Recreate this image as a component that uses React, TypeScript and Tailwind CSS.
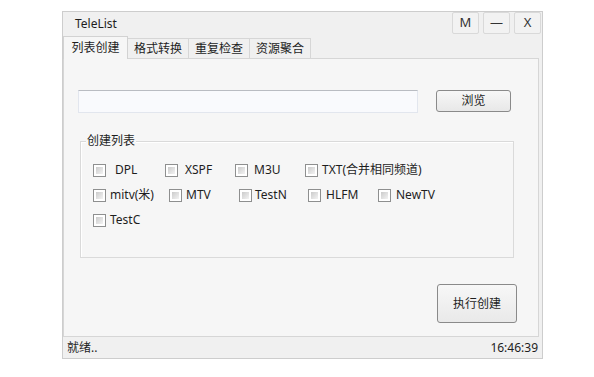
import React from 'react';

const font = { fontFamily: '"Noto Sans", "Noto Sans CJK SC", sans-serif' };

const rows = [
    [
        { label: 'DPL', w: 'w-[72px]', gap: 'ml-[9px]' },
        { label: 'XSPF', w: 'w-[70px]', gap: 'ml-[7px]' },
        { label: 'M3U', w: 'w-[70px]', gap: 'ml-[6px]' },
        { label: 'TXT(合并相同频道)', w: 'w-auto', gap: 'ml-[4px]' },
    ],
    [
        { label: 'mitv(米)', w: 'w-[76px]', gap: 'ml-[4px]' },
        { label: 'MTV', w: 'w-[70px]', gap: 'ml-[4px]' },
        { label: 'TestN', w: 'w-[69px]', gap: 'ml-[3px]' },
        { label: 'HLFM', w: 'w-[70px]', gap: 'ml-[5px]' },
        { label: 'NewTV', w: 'w-auto', gap: 'ml-[5px]' },
    ],
    [{ label: 'TestC', w: 'w-auto', gap: 'ml-[4px]' }],
];

function CheckBox() {
    return (
        <div className="w-[13px] h-[13px] shrink-0 border border-[#8e8f8f] bg-white p-[2px]">
            <div className="w-full h-full bg-gradient-to-br from-[#cbcbcb] to-[#f3f3f3]" />
        </div>
    );
}

function TitleButton({ children }: { children: React.ReactNode }) {
    return (
        <div className="w-[27px] h-[22px] flex items-center justify-center rounded-[2px] border border-[#d9d9d9] bg-[#f2f2f2] text-[13px] text-[#333]">
            {children}
        </div>
    );
}

export default function App() {
    return (
        <div className="w-[594px] h-[377px] bg-white pt-[11px] pl-[62px] text-[12px] text-[#1e1e1e]" style={font}>
            <div className="w-[481px] h-[348px] border border-[#cdcdcd] bg-[#f0f0f0] flex flex-col">
                {/* title bar */}
                <div className="h-[24px] flex items-start justify-between">
                    <span className="pl-[12px] pt-[3px] text-[12px] leading-[18px]">TeleList</span>
                    <div className="flex gap-[4px] pr-[1px]">
                        <TitleButton>M</TitleButton>
                        <TitleButton>—</TitleButton>
                        <TitleButton>X</TitleButton>
                    </div>
                </div>

                {/* tabs */}
                <div className="h-[22px] flex items-end">
                    <div className="relative z-10 -mb-px w-[65px] h-[23px] flex items-center justify-center border border-b-0 border-[#d2d2d2] bg-[#f6f6f6]">
                        列表创建
                    </div>
                    {['格式转换', '重复检查', '资源聚合'].map((t) => (
                        <div key={t} className="w-[61px] h-[20px] flex items-center justify-center border-t border-r border-[#d6d6d6] bg-[#f0f0f0] pt-[1px]">
                            {t}
                        </div>
                    ))}
                </div>

                {/* panel */}
                <div className="flex-1 mr-[3px] border border-[#d6d6d6] bg-[#f6f6f6] pl-[14px] pt-[31px] flex flex-col">
                    <div className="flex items-start">
                        <div className="w-[340px] h-[23px] border border-[#e2e6ee] border-t-[#b9bcc2] bg-[#f9fafd]" />
                        <button className="ml-[18px] w-[75px] h-[22px] rounded-[3px] border border-[#8a8a8a] bg-gradient-to-b from-[#f7f7f7] to-[#e8e8e8] text-[12px] leading-none">
                            浏览
                        </button>
                    </div>

                    <div className="relative mt-[28px] ml-[2px] w-[434px] h-[117px] border border-[#dadada] shadow-[inset_1px_1px_0_#ffffff] pl-[12px] pt-[21px] flex flex-col gap-[11px]">
                        <span className="absolute left-[5px] -top-[9px] px-[1px] bg-[#f6f6f6] leading-[16px]">创建列表</span>
                        {rows.map((row, i) => (
                            <div key={i} className="flex items-center h-[14px]">
                                {row.map((c) => (
                                    <div key={c.label} className={`flex items-center ${c.w}`}>
                                        <CheckBox />
                                        <span className={`${c.gap} leading-[14px]`}>{c.label}</span>
                                    </div>
                                ))}
                            </div>
                        ))}
                    </div>

                    <div className="flex justify-end pr-[21px] mt-[26px]">
                        <button className="w-[80px] h-[39px] rounded-[3px] border border-[#8a8a8a] bg-gradient-to-b from-[#f7f7f7] to-[#e9e9e9] text-[12px] leading-none">
                            执行创建
                        </button>
                    </div>
                </div>

                {/* status bar */}
                <div className="h-[21px] flex items-center justify-between px-[4px]">
                    <span>就绪..</span>
                    <span>16:46:39</span>
                </div>
            </div>
        </div>
    );
}
